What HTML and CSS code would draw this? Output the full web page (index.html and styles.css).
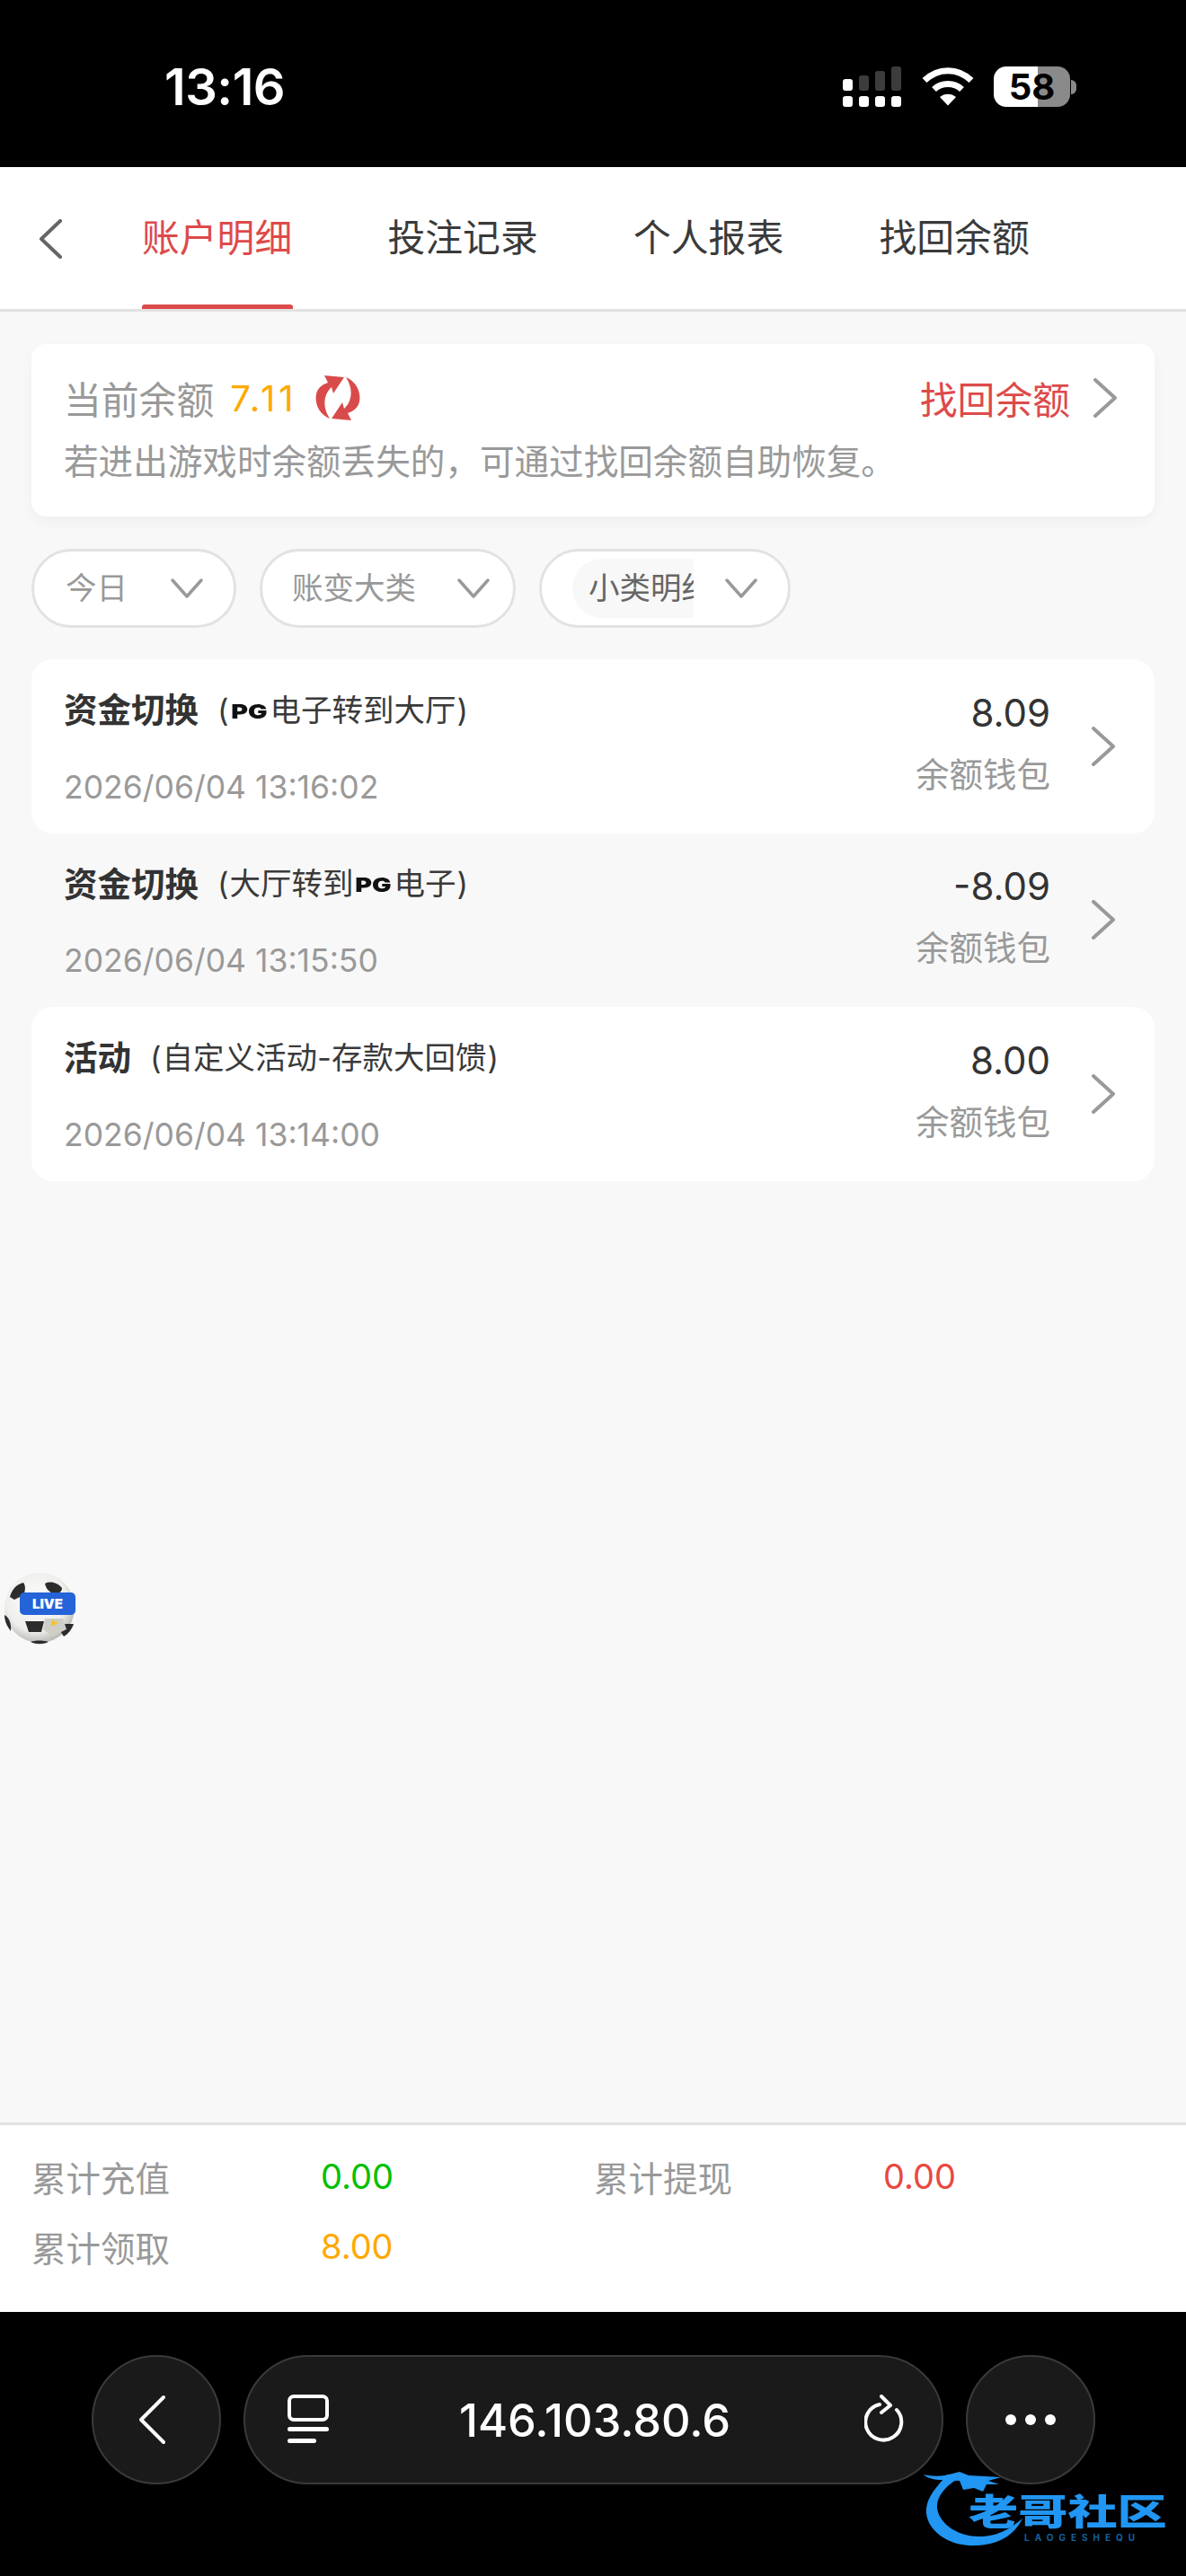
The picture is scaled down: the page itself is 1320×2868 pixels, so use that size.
FILE: index.html
```html
<!DOCTYPE html>
<html lang="zh">
<head>
<meta charset="utf-8">
<title>账户明细</title>
<link rel="stylesheet" href="styles.css">
</head>
<body>
<div class="page">
  <header class="status">
    <span class="time">13:16</span>
    <div class="status-icons">
      <svg class="sig" viewBox="0 0 65 45"><g fill="#fff"><rect x="0" y="14" width="11" height="13" rx="3"/><rect x="0" y="33" width="11" height="12" rx="3"/><rect x="18" y="33" width="11" height="12" rx="3"/><rect x="36" y="33" width="11" height="12" rx="3"/><rect x="54" y="33" width="11" height="12" rx="3"/></g><g fill="#3c3c3c"><rect x="18" y="10" width="11" height="17" rx="3"/><rect x="36" y="5" width="11" height="22" rx="3"/><rect x="54" y="0" width="11" height="27" rx="3"/></g></svg>
      <svg class="wifi" viewBox="0 0 58 44"><g fill="none" stroke="#fff" stroke-width="7"><path d="M3 15.500C18 1 40 1 55 15.500"/><path d="M13.500 25.500C22 17.500 36 17.500 44.500 25.500"/></g><path d="M20 34C25 29.500 33 29.500 38 34L29 43.500Z" fill="#fff"/></svg>
      <div class="batt"><span class="batt-num">58</span></div><span class="batt-nub"></span>
    </div>
  </header>

  <nav class="tabs">
    <svg class="nav-back" viewBox="0 0 28 44"><path d="M25 2L4 22L25 42" fill="none" stroke="#666" stroke-width="4" stroke-linecap="round" stroke-linejoin="round"/></svg>
    <a class="tab active">账户明细</a>
    <a class="tab">投注记录</a>
    <a class="tab">个人报表</a>
    <a class="tab">找回余额</a>
  </nav>

  <main class="main">
    <section class="balance">
      <div class="bal-top">
        <span class="bal-label">当前余额</span>
        <span class="bal-num">7.11</span>
        <svg class="bal-refresh" viewBox="0 0 50 52"><g fill="#d94b4b"><path d="M10 1L32 3L20 21L18 14C11 20 6 34 16 49C4 44 -1 32 1 22C2 16 7 11 14 9Z"/><path d="M10 1L32 3L20 21L18 14C11 20 6 34 16 49C4 44 -1 32 1 22C2 16 7 11 14 9Z" transform="rotate(180 25 26)"/></g></svg>
        <span class="bal-link">找回余额</span>
        <svg class="chev" viewBox="0 0 28 44"><path d="M3 2L25 22L3 42" fill="none" stroke="#999" stroke-width="4" stroke-linecap="round" stroke-linejoin="round"/></svg>
      </div>
      <p class="bal-note">若进出游戏时余额丢失的，可通过找回余额自助恢复。</p>
    </section>

    <section class="filters">
      <div class="pill pill-a"><span class="pill-text">今日</span><svg class="pill-arrow" viewBox="0 0 36 22"><path d="M2 2L18 20L34 2" fill="none" stroke="#999" stroke-width="3.500" stroke-linecap="round" stroke-linejoin="round"/></svg></div>
      <div class="pill pill-b"><span class="pill-text">账变大类</span><svg class="pill-arrow" viewBox="0 0 36 22"><path d="M2 2L18 20L34 2" fill="none" stroke="#999" stroke-width="3.500" stroke-linecap="round" stroke-linejoin="round"/></svg></div>
      <div class="pill pill-c"><span class="pill-clip"><span class="pill-inner">小类明细</span></span><svg class="pill-arrow" viewBox="0 0 36 22"><path d="M2 2L18 20L34 2" fill="none" stroke="#999" stroke-width="3.500" stroke-linecap="round" stroke-linejoin="round"/></svg></div>
    </section>

    <section class="list">
      <article class="row row-white">
        <div class="row-left">
          <div class="row-title"><b class="row-name">资金切换</b><span class="row-sub"><span class="par">(</span><i class="pg">PG</i>电子转到大厅<span class="par">)</span></span></div>
          <div class="row-date">2026/06/04 13:16:02</div>
        </div>
        <div class="row-right"><div class="row-amt">8.09</div><div class="row-wallet">余额钱包</div></div>
        <svg class="chev" viewBox="0 0 28 44"><path d="M3 2L25 22L3 42" fill="none" stroke="#999" stroke-width="4" stroke-linecap="round" stroke-linejoin="round"/></svg>
      </article>
      <article class="row">
        <div class="row-left">
          <div class="row-title"><b class="row-name">资金切换</b><span class="row-sub"><span class="par">(</span>大厅转到<i class="pg">PG</i>电子<span class="par">)</span></span></div>
          <div class="row-date">2026/06/04 13:15:50</div>
        </div>
        <div class="row-right"><div class="row-amt">-8.09</div><div class="row-wallet">余额钱包</div></div>
        <svg class="chev" viewBox="0 0 28 44"><path d="M3 2L25 22L3 42" fill="none" stroke="#999" stroke-width="4" stroke-linecap="round" stroke-linejoin="round"/></svg>
      </article>
      <article class="row row-white">
        <div class="row-left">
          <div class="row-title"><b class="row-name">活动</b><span class="row-sub"><span class="par">(</span>自定义活动-存款大回馈<span class="par">)</span></span></div>
          <div class="row-date">2026/06/04 13:14:00</div>
        </div>
        <div class="row-right"><div class="row-amt">8.00</div><div class="row-wallet">余额钱包</div></div>
        <svg class="chev" viewBox="0 0 28 44"><path d="M3 2L25 22L3 42" fill="none" stroke="#999" stroke-width="4" stroke-linecap="round" stroke-linejoin="round"/></svg>
      </article>
    </section>
  </main>

  <div class="ball">
    <svg class="ball-art" viewBox="0 0 80 84"><defs><radialGradient id="bg" cx="45%" cy="40%" r="62%"><stop offset="0" stop-color="#fff"/><stop offset="0.7" stop-color="#eeeeec"/><stop offset="1" stop-color="#b5b5b0"/></radialGradient></defs><circle cx="40" cy="42" r="39" fill="url(#bg)"/><g fill="#2c2c2c"><path d="M7 30C9 22 14 16 22 14C25 18 24 24 22 28L12 33Z"/><path d="M46 15C52 12 60 14 65 20C65 25 60 27 55 26C50 24 47 20 46 15Z"/><path d="M1 50C5 52 9 58 8 68C4 63 1 57 1 50Z"/><path d="M24 57H45L42 69H28Z"/><path d="M58 60H78C76 66 72 71 67 74Z"/><path d="M30 80C35 78 44 78 50 80C44 83 36 83 30 80Z"/></g><path d="M46 54H66L70 66L54 74L44 66Z" fill="#cfcfc8"/><path d="M53 55L61 59L53 63Z" fill="#f4c430"/></svg>
    <span class="ball-live">LIVE</span>
  </div>

  <footer class="summary">
    <span class="sum-label">累计充值</span><span class="sum-val green">0.00</span>
    <span class="sum-label">累计提现</span><span class="sum-val red">0.00</span>
    <span class="sum-label">累计领取</span><span class="sum-val orange">8.00</span>
  </footer>

  <div class="browser">
    <div class="circle-btn">
      <svg class="br-back" viewBox="0 0 32 56"><path d="M29 3L4 28L29 53" fill="none" stroke="#fff" stroke-width="4" stroke-linecap="round" stroke-linejoin="round"/></svg>
    </div>
    <div class="url-bar">
      <svg class="url-tabs" viewBox="0 0 46 56"><rect x="2" y="2" width="42" height="26" rx="5" fill="none" stroke="#fff" stroke-width="4"/><rect x="0" y="36" width="46" height="5" rx="2.500" fill="#fff"/><rect x="0" y="49" width="32" height="5" rx="2.500" fill="#fff"/></svg>
      <span class="url-text">146.103.80.6</span>
      <svg class="url-reload" viewBox="0 0 46 56"><path d="M17 11A20 20 0 1 0 36 17" fill="none" stroke="#fff" stroke-width="4" stroke-linecap="round"/><path d="M19 2L29 12L19 20" fill="none" stroke="#fff" stroke-width="4" stroke-linecap="round" stroke-linejoin="round"/></svg>
    </div>
    <div class="circle-btn">
      <svg class="br-more" viewBox="0 0 56 12"><circle cx="6" cy="6" r="6" fill="#fff"/><circle cx="28" cy="6" r="6" fill="#fff"/><circle cx="50" cy="6" r="6" fill="#fff"/></svg>
    </div>
  </div>

  <div class="mark">
    <svg class="mark-dragon" viewBox="0 0 110 84"><g fill="#2196f3"><path d="M26 3C16 16 2 28 3 46C5 66 28 84 60 82C90 80 103 66 110 52C98 62 84 72 62 72C38 72 17 58 15 40C14 28 24 16 38 8Z"/><path d="M0 3C8 5 16 5 24 4L40 0L50 4L86 6L72 10L84 14L70 14L66 22L56 18L44 20L40 10L20 9C12 9 4 7 0 3Z"/></g></svg>
    <span class="mark-cn">老哥社区</span>
    <span class="mark-en">LAOGESHEQU</span>
  </div>
</div>
</body>
</html>
```
FILE: styles.css
```css
* { box-sizing: border-box; }
html, body { margin: 0; padding: 0; }
body { font-family: "Inter", "Noto Sans CJK SC", sans-serif; background: #000; }
.page { position: relative; width: 1320px; height: 2868px; display: flex; flex-direction: column; overflow: hidden; background: #f8f8f8; }

.status { height: 186px; flex: none; background: #000; position: relative; display: flex; justify-content: space-between; }
.time { margin: 65px 0 0 183px; font: 600 56px/64px "Inter", sans-serif; color: #fff; letter-spacing: -.5px; }
.status-icons { display: flex; align-items: flex-start; margin: 74px 122px 0 0; }
.sig { width: 65px; height: 45px; margin-right: 23px; }
.wifi { width: 58px; height: 44px; margin-right: 22px; }
.batt { width: 85px; height: 45px; border-radius: 14px; background: linear-gradient(90deg, #fff 0, #fff 58%, #8a8a8a 58%, #8a8a8a 100%); display: flex; align-items: center; justify-content: center; }
.batt-num { font: 700 40px/45px "Inter", sans-serif; color: #000; }
.batt-nub { width: 6px; height: 16px; margin: 15px 0 0 1px; background: #8a8a8a; border-radius: 0 6px 6px 0; }

.tabs { height: 161px; flex: none; background: #fff; border-bottom: 3px solid #e2e2e2; display: flex; align-items: stretch; padding-left: 158px; gap: 105.500px; position: relative; }
.nav-back { position: absolute; left: 42px; top: 58px; width: 28px; height: 44px; }
.tab { width: 168px; font-size: 41.800px; line-height: 158px; color: #3a3a3a; white-space: nowrap; position: relative; }
.tab.active { color: #dd4a4a; }
.tab.active::after { content: ""; position: absolute; left: 0; right: 0; bottom: 0; height: 5px; background: #dd4a4a; border-radius: 3px 3px 0 0; }

.main { flex: 1; padding: 36px 35px 0; }
.balance { height: 192px; background: #fff; border-radius: 16px; box-shadow: 0 6px 16px rgba(0,0,0,.04); padding: 33px 41px 0 36px; }
.bal-top { height: 54px; display: flex; align-items: center; }
.bal-label { font-size: 41.800px; color: #999; white-space: nowrap; }
.bal-num { font-size: 40px; color: #ffa800; margin-left: 18px; letter-spacing: 4px; }
.bal-refresh { width: 50px; height: 52px; margin-left: 21px; }
.bal-link { margin-left: auto; font-size: 41.800px; color: #dd4a4a; white-space: nowrap; }
.chev { width: 28px; height: 44px; flex: none; margin-left: 25px; }
.bal-note { margin: 17px 0 0; font-size: 38.600px; line-height: 54px; color: #999; white-space: nowrap; }

.filters { display: flex; margin-top: 36px; gap: 26px; }
.pill { height: 88px; border: 3px solid #e2e2e2; border-radius: 44px; background: #fff; display: flex; align-items: center; }
.pill-a { width: 228px; padding-left: 35px; }
.pill-b { width: 285px; padding-left: 33px; }
.pill-c { width: 280px; padding-left: 34px; }
.pill-text { font-size: 34.500px; line-height: 66px; color: #999; white-space: nowrap; }
.pill-a .pill-text { width: 117px; }
.pill-b .pill-text { width: 184px; }
.pill-clip { width: 135px; height: 66px; flex: none; overflow: hidden; background: #f8f8f8; border-radius: 33px 0 0 33px; padding-left: 18px; margin-right: 35px; }
.pill-inner { font-size: 34.500px; line-height: 66px; color: #666; white-space: nowrap; }
.pill-arrow { width: 36px; height: 22px; flex: none; }

.list { margin-top: 35px; display: flex; flex-direction: column; }
.row { height: 193.500px; display: flex; align-items: center; padding: 0 43px 0 36px; border-radius: 24px; }
.row-white { background: #fff; }
.row-left { flex: 1; display: flex; flex-direction: column; gap: 43px; margin-top: 3px; }
.row-title { display: flex; align-items: center; height: 46px; white-space: nowrap; }
.row-name { font-size: 37.500px; font-weight: 700; color: #333; }
.row-sub { font-size: 34.500px; color: #3a3a3a; margin-left: 20px; }
.par { margin: 0 1px; }
.pg { font: normal 900 22px/1 "Inter", sans-serif; color: #111; letter-spacing: 0; transform: scaleX(1.3); transform-origin: left center; display: inline-block; width: 45px; vertical-align: 3px; padding-left: 1px; white-space: nowrap; }
.row-date { font-size: 35.500px; line-height: 46px; color: #999; white-space: nowrap; }
.row-right { text-align: right; display: flex; flex-direction: column; gap: 23px; margin-top: -5px; }
.row-amt { font-size: 42px; line-height: 46px; color: #333; }
.row-wallet { font-size: 37.500px; line-height: 46px; color: #999; white-space: nowrap; }
.row .chev { margin-left: 45px; }

.ball { position: absolute; left: 4px; top: 1748px; width: 80px; height: 84px; }
.ball-art { width: 80px; height: 84px; display: block; filter: blur(.7px); }
.ball-live { position: absolute; left: 18px; top: 25px; width: 62px; height: 25px; border-radius: 5px; background: #2563d8; color: #fff; font: 900 15px/25px "Inter", sans-serif; text-align: center; }

.summary { height: 211px; flex: none; background: #fff; border-top: 3px solid #e2e2e2; padding: 18px 0 0 35px; display: grid; grid-template-columns: 322px 304px 322px 1fr; grid-auto-rows: 78px; align-items: center; align-content: start; }
.sum-label { font-size: 38.500px; color: #999; white-space: nowrap; }
.sum-val { font-size: 38px; }
.green { color: #00c000; }
.red { color: #e8483f; }
.orange { color: #ffa800; }

.browser { height: 294px; flex: none; background: #000; display: flex; gap: 25px; padding: 48px 0 0 102px; }
.circle-btn { width: 144px; height: 144px; border-radius: 50%; background: #1a1a1a; border: 2px solid #3a3a3a; display: flex; align-items: center; justify-content: center; }
.br-back { width: 32px; height: 56px; margin-right: 10px; }
.br-more { width: 56px; height: 12px; }
.url-bar { width: 779px; height: 144px; border-radius: 72px; background: #1a1a1a; border: 2px solid #3a3a3a; display: flex; align-items: center; justify-content: space-between; padding: 0 40px 0 47px; }
.url-tabs, .url-reload { width: 46px; height: 56px; flex: none; }
.url-text { font-size: 50.500px; font-weight: 500; color: #fff; margin-left: -4px; }

.mark { position: absolute; left: 1028px; top: 2752px; width: 280px; height: 90px; }
.mark-dragon { position: absolute; left: 0; top: 0; width: 110px; height: 84px; }
.mark-cn { position: absolute; left: 50px; top: 19px; font: 900 40px/46px "Noto Sans CJK SC", sans-serif; color: #2196f3; white-space: nowrap; transform: scaleX(1.38); transform-origin: left center; }
.mark-en { position: absolute; left: 112px; top: 67px; font: 700 10px/12px "Inter", sans-serif; letter-spacing: 6px; color: #14609e; white-space: nowrap; }
```
